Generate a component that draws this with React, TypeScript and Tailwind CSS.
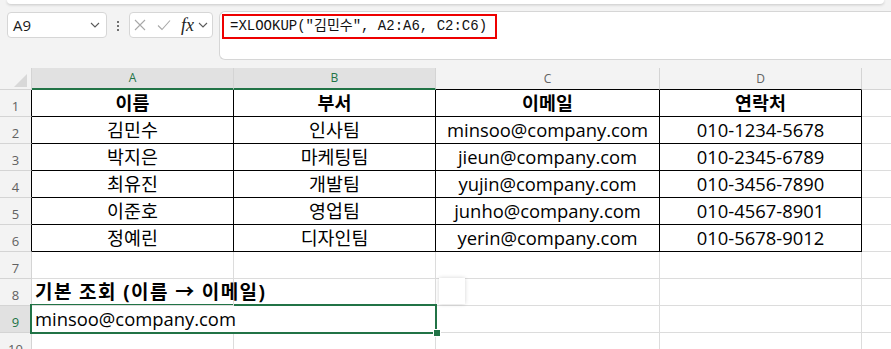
import React from "react";

const GRID = "border-[#dcdcdc]";

function Chevron({ className = "" }: { className?: string }) {
  return (
    <svg width="10" height="6" viewBox="0 0 10 6" className={className}>
      <path d="M1 1l4 4 4-4" fill="none" stroke="#5a5a5a" strokeWidth="1.1" />
    </svg>
  );
}

type CellProps = {
  w: string;
  children?: React.ReactNode;
  black?: boolean;
  bold?: boolean;
  left?: boolean;
  extra?: string;
};

function Cell({ w, children, black, bold, left, extra = "" }: CellProps) {
  return (
    <div
      className={`${w} h-full shrink-0 border-r border-b ${black ? "border-black" : GRID} flex items-center ${left ? "justify-start pl-[3px]" : "justify-center"} text-[18.4px] text-black whitespace-nowrap ${bold ? "font-bold" : ""} ${extra}`}
    >
      {children}
    </div>
  );
}

function RowHead({ n, black, selected }: { n: number; black?: boolean; selected?: boolean }) {
  return (
    <div
      className={`w-[32px] h-full shrink-0 border-r border-b ${black ? "border-r-black" : "border-r-[#d4d4d4]"} border-b-[#d4d4d4] ${selected ? "bg-[#e1e1e1] text-[#217346]" : "bg-[#f3f3f3] text-[#616161]"} flex items-end justify-center pb-[3px] text-[13px] leading-[13px] font-['Open_Sans',sans-serif]`}
    >
      {n}
    </div>
  );
}

const data = [
  ["김민수", "인사팀", "minsoo@company.com", "010-1234-5678"],
  ["박지은", "마케팅팀", "jieun@company.com", "010-2345-6789"],
  ["최유진", "개발팀", "yujin@company.com", "010-3456-7890"],
  ["이준호", "영업팀", "junho@company.com", "010-4567-8901"],
  ["정예린", "디자인팀", "yerin@company.com", "010-5678-9012"],
];

export default function App() {
  return (
    <div className="w-[891px] h-[349px] overflow-hidden bg-[#f3f3f3] font-['Open_Sans','Noto_Sans_CJK_KR',sans-serif]">
      {/* ribbon edge */}
      <div className="mx-[7px] h-[4px] bg-white rounded-b-[6px] shadow-[0_1px_3px_rgba(0,0,0,0.18)]" />

      {/* formula bar */}
      <div className="flex items-start mt-[7px] h-[49px]">
        <div className="ml-[7px] mt-[1px] w-[100px] h-[26px] shrink-0 bg-white border border-[#d6d6d6] rounded-[4px] flex items-center justify-between pl-[5px] pr-[6px]">
          <span className="text-[15px] text-[#1a1a1a]">A9</span>
          <Chevron />
        </div>
        <div className="w-[22px] h-[28px] shrink-0 flex flex-col items-center justify-center gap-[2px] mt-[1px]">
          <span className="w-[2px] h-[2px] bg-[#444] rounded-full" />
          <span className="w-[2px] h-[2px] bg-[#444] rounded-full" />
          <span className="w-[2px] h-[2px] bg-[#444] rounded-full" />
        </div>
        <div className="mt-[1px] w-[84px] h-[26px] shrink-0 bg-white border border-[#d6d6d6] rounded-[4px] flex items-center pl-[3px]">
          <svg width="12" height="12" viewBox="0 0 12 12" className="ml-[1px]">
            <path d="M1 1l10 10M11 1L1 11" stroke="#a8a8a8" strokeWidth="1.1" />
          </svg>
          <svg width="14" height="12" viewBox="0 0 14 12" className="ml-[11px]">
            <path d="M1 6.5l4 4L13 1.5" fill="none" stroke="#a8a8a8" strokeWidth="1.1" />
          </svg>
          <span className="ml-[10px] text-[18px] leading-[18px] italic text-[#222] font-['Liberation_Serif',serif]">fx</span>
          <Chevron className="ml-[4px]" />
        </div>
        <div className="ml-[6px] flex-1 h-[49px] bg-white border border-r-0 border-[#d6d6d6] rounded-l-[6px] pl-[2px]">
          <div className="inline-flex items-center h-[25px] w-[275px] border-2 border-[#ee0000] pl-[6px] text-[14px] text-[#111] font-['Liberation_Mono','Noto_Sans_CJK_KR',monospace] whitespace-pre">
            {'=XLOOKUP("김민수", A2:A6, C2:C6)'}
          </div>
        </div>
      </div>

      {/* grid */}
      <div className="mt-[8px] bg-white">
        {/* column headers */}
        <div className="flex h-[22px] text-[12px] font-['Open_Sans',sans-serif]">
          <div className="w-[32px] shrink-0 border-r border-b border-[#d4d4d4] bg-[#f3f3f3] relative">
            <svg width="14" height="13" viewBox="0 0 14 13" className="absolute right-[3px] bottom-[2px]">
              <path d="M13 0L13 13L0 13Z" fill="#d8d8d8" />
            </svg>
          </div>
          <div className="w-[202px] shrink-0 border-r border-r-[#d4d4d4] border-b-2 border-b-[#217346] bg-[#e1e1e1] text-[#217346] flex items-center justify-center">A</div>
          <div className="w-[202px] shrink-0 border-r border-r-[#d4d4d4] border-b-2 border-b-[#217346] bg-[#e1e1e1] text-[#217346] flex items-center justify-center">B</div>
          <div className="w-[224px] shrink-0 border-r border-r-[#d4d4d4] border-b border-b-black bg-[#f3f3f3] text-[#616161] flex items-center justify-center">C</div>
          <div className="w-[202px] shrink-0 border-r border-r-[#d4d4d4] border-b border-b-black bg-[#f3f3f3] text-[#616161] flex items-center justify-center">D</div>
          <div className="flex-1 border-b border-[#d4d4d4] bg-[#f3f3f3]" />
        </div>

        {/* row 1 header */}
        <div className="flex h-[27px]">
          <RowHead n={1} black />
          <Cell w="w-[202px]" black bold>이름</Cell>
          <Cell w="w-[202px]" black bold>부서</Cell>
          <Cell w="w-[224px]" black bold>이메일</Cell>
          <Cell w="w-[202px]" black bold>연락처</Cell>
          <div className={`flex-1 border-b ${GRID}`} />
        </div>

        {data.map((r, i) => (
          <div key={i} className="flex h-[27px]">
            <RowHead n={i + 2} black />
            <Cell w="w-[202px]" black>{r[0]}</Cell>
            <Cell w="w-[202px]" black>{r[1]}</Cell>
            <Cell w="w-[224px]" black>{r[2]}</Cell>
            <Cell w="w-[202px]" black>{r[3]}</Cell>
            <div className={`flex-1 border-b ${GRID}`} />
          </div>
        ))}

        {/* row 7 */}
        <div className="flex h-[27px]">
          <RowHead n={7} />
          <Cell w="w-[202px]" />
          <Cell w="w-[202px]" />
          <Cell w="w-[224px]" />
          <Cell w="w-[202px]" />
          <div className={`flex-1 border-b ${GRID}`} />
        </div>

        {/* row 8 */}
        <div className="flex h-[27px]">
          <RowHead n={8} />
          <Cell w="w-[202px]" bold left extra="overflow-visible relative z-10 tracking-[1.4px] text-[19px]">
            기본 조회 (이름 → 이메일)
          </Cell>
          <Cell w="w-[202px]" />
          <Cell w="w-[224px]" extra="relative">
            <div className="absolute left-[3px] -top-[1px] w-[26px] h-[26px] bg-white shadow-[0_0_4px_rgba(0,0,0,0.18)]" />
          </Cell>
          <Cell w="w-[202px]" />
          <div className={`flex-1 border-b ${GRID}`} />
        </div>

        {/* row 9 */}
        <div className="flex h-[27px]">
          <RowHead n={9} selected />
          <Cell w="w-[404px]" left extra="relative">
            minsoo@company.com
            <div className="absolute -left-[2px] -top-[2px] w-[407px] h-[30px] border-2 border-[#217346] pointer-events-none" />
            <div className="absolute left-[401px] top-[23px] w-[6px] h-[6px] bg-[#217346] border border-white box-content" />
          </Cell>
          <Cell w="w-[224px]" />
          <Cell w="w-[202px]" />
          <div className={`flex-1 border-b ${GRID}`} />
        </div>

        {/* row 10 */}
        <div className="flex h-[27px]">
          <RowHead n={10} />
          <Cell w="w-[202px]" />
          <Cell w="w-[202px]" />
          <Cell w="w-[224px]" />
          <Cell w="w-[202px]" />
          <div className={`flex-1 border-b ${GRID}`} />
        </div>
      </div>
    </div>
  );
}
